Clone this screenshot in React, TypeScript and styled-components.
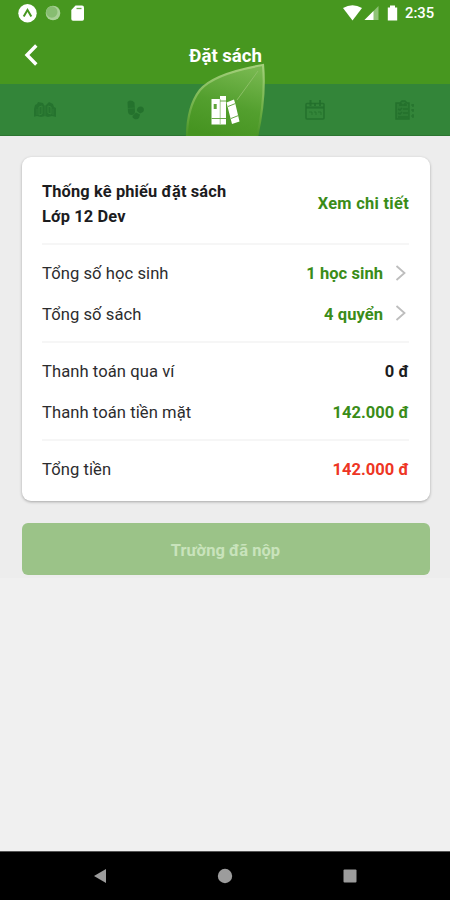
import React from "react";
import styled, { createGlobalStyle } from "styled-components";

const GlobalStyle = createGlobalStyle`
  * { box-sizing: border-box; }
  body { margin: 0; background: #f0f0f0; font-family: Roboto, sans-serif; }
`;

const Screen = styled.div`
  width: 450px;
  height: 900px;
  display: flex;
  flex-direction: column;
  background: #f0f0f0;
  overflow: hidden;
`;

const StatusBar = styled.div`
  height: 27px;
  flex: none;
  display: flex;
  justify-content: space-between;
  background: #47971f;
  color: #fff;
`;

const StatusIcons = styled.svg`
  display: block;
  height: 27px;
`;

const StatusRight = styled.div`
  display: flex;
  width: 112px;
`;

const Clock = styled.span`
  font-size: 14.8px;
  font-weight: 500;
  line-height: 27px;
`;

const Header = styled.header`
  height: 57px;
  flex: none;
  display: grid;
  grid-template-columns: 60px 1fr 60px;
  align-items: center;
  background: #47971f;
`;

const BackButton = styled.button`
  border: 0;
  padding: 0 0 2px 22px;
  background: none;
  display: flex;
`;

const Title = styled.h1`
  margin: 0;
  padding-left: 1px;
  text-align: center;
  color: #fff;
  font-size: 18.6px;
  line-height: 24px;
  font-weight: 700;
`;

const TabBar = styled.nav`
  height: 51.5px;
  flex: none;
  display: grid;
  grid-template-columns: repeat(5, 1fr);
  background: #338539;
  border-bottom: 1px solid #2c7531;
`;

const Tab = styled.div`
  position: relative;
  display: flex;
  align-items: center;
  justify-content: center;
  padding-top: 2px;
`;

const Leaf = styled.svg`
  position: absolute;
  left: 4px;
  bottom: -1px;
`;

const Content = styled.main`
  flex: 1;
  padding: 21.5px 20.5px 0 21.5px;
  background: linear-gradient(#ededed 0 442px, #f0f0f0 442px);
`;

const Card = styled.section`
  height: 344px;
  padding: 21.5px 20.5px 0;
  background: #fff;
  border-radius: 9px;
  box-shadow: 0 1px 3px rgba(0, 0, 0, 0.3);
`;

const CardHead = styled.div`
  height: 64px;
  display: flex;
  justify-content: space-between;
  font-weight: 700;
  font-size: 16.4px;
  line-height: 25px;
  letter-spacing: 0.13px;
  color: #1c1c1e;
`;

const DetailLink = styled.a`
  color: #3a8c18;
  padding-top: 12.5px;
  letter-spacing: 0.3px;
`;

const Group = styled.div`
  border-top: 2px solid #f6f6f6;
  padding: 9px 0 6px;
`;

const Row = styled.div`
  height: 40.5px;
  display: flex;
  align-items: center;
  font-size: 16.6px;
  line-height: 25px;
  letter-spacing: 0.06px;
  color: #2c2c2e;
`;

const Value = styled.span<{ $color: string }>`
  margin-left: auto;
  font-weight: 700;
  font-size: 16.5px;
  color: ${(p) => p.$color};
`;

const Chevron = styled.svg`
  margin: -2px 0 0 10px;
  width: 16px;
  height: 18px;
`;

const SubmitButton = styled.button`
  display: block;
  width: 100%;
  height: 52px;
  margin-top: 21.6px;
  border: 0;
  border-radius: 6px;
  background: #9bc388;
  color: #c9e3bc;
  font: 700 16.5px Roboto, sans-serif;
  padding: 4px 0 0;
`;

const SystemNav = styled.footer`
  height: 49.5px;
  flex: none;
  display: flex;
  justify-content: center;
  gap: 109px;
  align-items: center;
  background: #000;
  border-top: 1px solid #555;
`;

const green = "#3a8c18";

const rows = [
  [
    { label: "Tổng số học sinh", value: "1 học sinh", color: green, link: true },
    { label: "Tổng số sách", value: "4 quyển", color: green, link: true },
  ],
  [
    { label: "Thanh toán qua ví", value: "0 đ", color: "#1c1c1e", link: false },
    { label: "Thanh toán tiền mặt", value: "142.000 đ", color: green, link: false },
  ],
  [{ label: "Tổng tiền", value: "142.000 đ", color: "#ee3524", link: false }],
];

const dim = "#226e2b";

const OpenBookIcon = () => (
  <svg width="22" height="18" viewBox="0 0 22 18" fill={dim} fillOpacity=".75">
    <path d="M1 4l2-1 1-2 5 1 1 2 1 1 1-1 3-3 4 2 1 3 2 1v9l-4-1-4 1-3-1-4 1-4-1-4 1V9l1-1z" />
    <path d="M5 6l3-1v8l-3 1zM14 5l3 1v7l-3-1z" fill="none" stroke="#338539" strokeWidth=".9" />
    <path d="M11 5v11M3 8v6M19 8v6" stroke="#338539" strokeWidth=".6" />
  </svg>
);

const StepsIcon = () => (
  <svg width="18" height="20" viewBox="0 0 18 20" fill={dim} fillOpacity=".85">
    <path d="M1.500 2Q5-1 8.500 2.500L9 12Q8.500 15 5.500 15T2 12z" />
    <path d="M12 7.500q3-2 5.500.5 1 2.500-.5 4l-3 1.500-3-2.500q-.5-2 1-3.500z" />
    <path d="M10 12.500l4 2-1 3.500q-2 2-4.500 1T6.500 16z" />
    <path d="M2 8.500l6.500-.5" stroke="#338539" strokeWidth=".5" />
  </svg>
);

const CalendarIcon = () => (
  <svg width="20" height="20" viewBox="0 0 20 20" fill="none" stroke={dim} strokeOpacity=".85" strokeWidth="1.6">
    <rect x="1" y="3.500" width="18" height="15.500" rx="1" />
    <path d="M1 7.500h18" strokeWidth="2.2" />
    <path d="M5.500 0v6M10 3v3M15 0v6" strokeWidth="2" />
    <path d="M4 12h3v3M9 12h2v3M13 12h3v3" strokeWidth=".8" />
  </svg>
);

const ClipboardIcon = () => (
  <svg width="20" height="20" viewBox="0 0 20 20" fill="none" stroke={dim} strokeOpacity=".85" strokeWidth="1.5">
    <path d="M1 3h4l2-2h3l2 2h2v16H1z" fill={dim} fillOpacity=".35" />
    <path d="M4 5h8M3 9l2 1 2-2M8 9h5M3 13l2 1 2-2M8 13h5M3 17h10M6 3v3M10 3v3" />
    <path d="M18 4v3M18 9v3M18 14v4M16 5h3M16 10h3M16 16h3" strokeWidth="1.2" />
  </svg>
);

const BooksLeaf = () => (
  <Leaf width="84" height="76" viewBox="184 60 84 76">
    <defs>
      <linearGradient id="leafFill" x1="0.7" y1="0" x2="0.4" y2="1">
        <stop offset="0" stopColor="#78b850" />
        <stop offset="0.55" stopColor="#539f2e" />
        <stop offset="1" stopColor="#469421" />
      </linearGradient>
      <linearGradient id="leafEdge" x1="0" y1="0" x2="0" y2="1">
        <stop offset="0" stopColor="#a5d07c" />
        <stop offset="0.55" stopColor="#75b34d" />
        <stop offset="1" stopColor="#479324" />
      </linearGradient>
    </defs>
    <path
      d="M263 65C234 70 211 77 200 90Q187 107 187 137H257Q266 97 263 65z"
      fill="url(#leafFill)"
      stroke="url(#leafEdge)"
      strokeWidth="2.2"
    />
    <path d="M258 71L237 100" stroke="#8cbf66" strokeWidth="1" />
    <g fill="#fff">
      <path d="M211.500 99h8.500v25.500h-8.500zM220 96h6v28.500h-6zM226.500 102.500l7.500-3 1.500 5 4 17-7.500 2.500z" />
    </g>
    <path d="M213.700 104h3v5h-3z" fill="#5fa43b" />
    <path d="M211.500 118.500h8.500M220 101h6M220 118.500h6M228 106.500l7.500-3M231 118.500l7.500-3" stroke="#69a948" strokeWidth="1" />
    <path d="M220.200 99v25" stroke="#69a948" strokeWidth=".6" />
  </Leaf>
);

export default function App() {
  return (
    <>
      <GlobalStyle />
      <Screen>
        <StatusBar>
          <StatusIcons width="100" viewBox="0 0 100 27">
            <circle cx="27.500" cy="13.300" r="9.200" fill="#fff" />
            <path d="M23.700 16.500l3.800-6.500 3.800 6.500" fill="none" stroke="#47971f" strokeWidth="2" />
            <circle cx="53" cy="13" r="7.300" fill="#a9d197" />
            <circle cx="51.800" cy="12" r="5.700" fill="#87bd71" />
            <path d="M75.500 5.500H82q2 0 2 2V19q0 1.700-1.700 1.700H73q-1.700 0-1.700-1.700V10z" fill="#fff" />
            <path d="M76.500 8.500h5" stroke="#47971f" strokeOpacity=".8" strokeWidth="1.300" />
          </StatusIcons>
          <StatusRight>
            <StatusIcons width="67" viewBox="338 0 67 27">
              <path d="M343 8q9.500-5.500 19 0l-9.500 12.500z" fill="#fff" />
              <path d="M378.500 6v14h-14z" fill="#8fc377" />
              <path d="M373.500 11v9h-9z" fill="#fff" />
              <path d="M390 5.500h5v2h2.200V20.500h-9.400V7.500h2.200z" fill="#fff" />
            </StatusIcons>
            <Clock>2:35</Clock>
          </StatusRight>
        </StatusBar>
        <Header>
          <BackButton aria-label="Quay lại">
            <svg width="18" height="24" viewBox="0 0 18 24" fill="none" stroke="#fff" strokeWidth="3.400">
              <path d="M14.300 2.500L5 12l9.300 9.500" />
            </svg>
          </BackButton>
          <Title>Đặt sách</Title>
        </Header>
        <TabBar>
          <Tab><OpenBookIcon /></Tab>
          <Tab><StepsIcon /></Tab>
          <Tab><BooksLeaf /></Tab>
          <Tab><CalendarIcon /></Tab>
          <Tab><ClipboardIcon /></Tab>
        </TabBar>
        <Content>
          <Card>
            <CardHead>
              <div>
                Thống kê phiếu đặt sách
                <br />
                Lớp 12 Dev
              </div>
              <DetailLink>Xem chi tiết</DetailLink>
            </CardHead>
            {rows.map((group, i) => (
              <Group key={i}>
                {group.map((row) => (
                  <Row key={row.label}>
                    {row.label}
                    <Value $color={row.color}>{row.value}</Value>
                    {row.link && (
                      <Chevron viewBox="0 0 16 18" fill="none" stroke="#bdbdbd" strokeWidth="1.800">
                        <path d="M3.500 2L11.500 9l-8 7" />
                      </Chevron>
                    )}
                  </Row>
                ))}
              </Group>
            ))}
          </Card>
          <SubmitButton>Trường đã nộp</SubmitButton>
        </Content>
        <SystemNav>
          <svg width="16" height="16" viewBox="0 0 16 16"><path d="M2 8L14 1v14z" fill="#9c9c9c" /></svg>
          <svg width="16" height="16" viewBox="0 0 16 16"><circle cx="8" cy="8" r="7.200" fill="#9c9c9c" /></svg>
          <svg width="16" height="16" viewBox="0 0 16 16"><rect x="1.500" y="1.500" width="13" height="13" rx="1" fill="#9c9c9c" /></svg>
        </SystemNav>
      </Screen>
    </>
  );
}
